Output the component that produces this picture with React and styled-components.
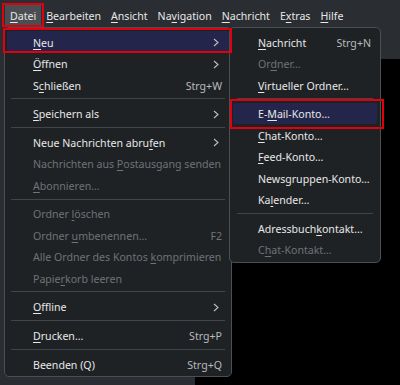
import React from 'react';
import styled, { createGlobalStyle, css } from 'styled-components';

const Global = createGlobalStyle`
  html, body { margin: 0; padding: 0; background: #000; }
  body {
    font-family: "Noto Sans", "DejaVu Sans", sans-serif;
    font-size: 10.6px;
    color: #e8e8e8;
  }
  #root { width: 400px; height: 385px; overflow: hidden; }
`;

const markCss = css`
  &::after {
    content: '';
    position: absolute;
    top: ${(p) => p.$mark.t}px;
    right: ${(p) => p.$mark.r}px;
    bottom: ${(p) => p.$mark.b}px;
    left: ${(p) => p.$mark.l}px;
    border: 2px solid #e1000c;
    pointer-events: none;
    z-index: 5;
  }
`;

const Window = styled.div`
  position: relative;
  width: 400px;
  height: 385px;
  display: flex;
  flex-direction: column;
  background: #000;
  overflow: hidden;
`;

const Header = styled.header`
  flex: none;
  height: 59px;
  background: #2a2d31;
`;

const MenuBar = styled.nav`
  display: flex;
  padding: 5px 0 0 5px;
`;

const BarItem = styled.div`
  position: relative;
  box-sizing: border-box;
  height: 20px;
  line-height: 19px;
  padding: 2px 5px 0;
  white-space: nowrap;
  color: #e8e8e8;
  background: ${(p) => (p.$active ? '#4a4d51' : 'transparent')};
  ${(p) => p.$mark && markCss}
`;

const Body = styled.div`
  flex: 1;
  display: flex;
`;

const LeftPane = styled.aside`
  width: 195px;
  background: #2a2d31;
`;

const MainPane = styled.main`
  flex: 1;
  background: #000;
`;

const Menu = styled.div`
  --pad: ${(p) => p.$pad}px;
  position: absolute;
  left: ${(p) => p.$x}px;
  top: ${(p) => p.$y}px;
  width: ${(p) => p.$w}px;
  box-sizing: border-box;
  display: flex;
  flex-direction: column;
  padding: 3px var(--pad) 2px;
  background: #1f2225;
  border: 1px solid #4b4e52;
  border-radius: 5px;
`;

const Row = styled.div`
  position: relative;
  box-sizing: border-box;
  height: 21.45px;
  display: flex;
  align-items: center;
  padding: 2px calc(9px - var(--pad)) 0 calc(28px - var(--pad));
  border-radius: 3px;
  white-space: nowrap;
  background: ${(p) => (p.$hl ? '#23264a' : 'transparent')};
  color: ${(p) => (p.$disabled ? '#6f7276' : '#e8e8e8')};
  ${(p) => p.$mark && markCss}
`;

const Label = styled.span`
  flex: 1;
`;

const Shortcut = styled.span`
  color: ${(p) => (p.$disabled ? '#6f7276' : '#b7b9bc')};
`;

const Arrow = styled.svg`
  display: block;
  margin-right: 3px;
`;

const Sep = styled.div`
  height: 7.2px;
  display: flex;
  align-items: center;
  &::before {
    content: '';
    flex: 1;
    height: 1px;
    margin: 0 4px;
    background: #414448;
  }
`;

const Mn = styled.span`
  text-decoration: underline;
  text-decoration-thickness: 1px;
  text-underline-offset: 2px;
`;

function Mnemonic({ text }) {
  const i = text.indexOf('&');
  if (i < 0) return text;
  return (
    <>
      {text.slice(0, i)}
      <Mn>{text[i + 1]}</Mn>
      {text.slice(i + 2)}
    </>
  );
}

const barItems = ['&Datei', '&Bearbeiten', '&Ansicht', 'Na&vigation', '&Nachricht', 'E&xtras', '&Hilfe'];

const mainItems = [
  { label: '&Neu', arrow: true, hl: true, mark: { t: -3, r: -3, b: -1, l: -4 } },
  { label: '&Öffnen', arrow: true },
  { label: 'S&chließen', shortcut: 'Strg+W' },
  { sep: true },
  { label: '&Speichern als', arrow: true },
  { sep: true },
  { label: 'Neue Nachrichten abru&fen', arrow: true },
  { label: 'Nachrichten aus &Postausgang senden', disabled: true },
  { label: '&Abonnieren…', disabled: true },
  { sep: true },
  { label: 'Ordner &löschen', disabled: true },
  { label: 'Ordner &umbenennen…', shortcut: 'F2', disabled: true },
  { label: 'Alle Ordner des Kontos &komprimieren', disabled: true },
  { label: 'Papie&rkorb leeren', disabled: true },
  { sep: true },
  { label: '&Offline', arrow: true },
  { sep: true },
  { label: '&Drucken…', shortcut: 'Strg+P' },
  { sep: true },
  { label: 'Beenden (Q)', shortcut: 'Strg+Q' },
];

const subItems = [
  { label: '&Nachricht', shortcut: 'Strg+N' },
  { label: 'Or&dner…', disabled: true },
  { label: '&Virtueller Ordner…' },
  { sep: true },
  { label: 'E-&Mail-Konto…', hl: true, mark: { t: -3.3, r: -7, b: -5.3, l: -3 } },
  { label: '&Chat-Konto…' },
  { label: '&Feed-Konto…' },
  { label: 'Newsgruppen-Konto…' },
  { label: 'Ka&lender…' },
  { sep: true },
  { label: 'Adressbuch&kontakt…' },
  { label: 'C&hat-Kontakt…', disabled: true },
];

function Chevron() {
  return (
    <Arrow width="6" height="9" viewBox="0 0 6 9">
      <polyline points="1,1 5,4.5 1,8" fill="none" stroke="#bdbfc2" strokeWidth="1.1" />
    </Arrow>
  );
}

function MenuList({ items }) {
  return items.map((it, i) =>
    it.sep ? (
      <Sep key={i} />
    ) : (
      <Row key={i} $hl={it.hl} $disabled={it.disabled} $mark={it.mark}>
        <Label>
          <Mnemonic text={it.label} />
        </Label>
        {it.shortcut && <Shortcut $disabled={it.disabled}>{it.shortcut}</Shortcut>}
        {it.arrow && <Chevron />}
      </Row>
    )
  );
}

export default function App() {
  return (
    <>
      <Global />
      <Window>
        <Header>
          <MenuBar>
            {barItems.map((b, i) => (
              <BarItem
                key={b}
                $active={i === 0}
                $mark={i === 0 ? { t: -2, r: -3, b: -2, l: -3 } : null}
              >
                <Mnemonic text={b} />
              </BarItem>
            ))}
          </MenuBar>
        </Header>
        <Body>
          <LeftPane />
          <MainPane />
        </Body>
        <Menu $x={4} $y={27} $w={228} $pad={2}>
          <MenuList items={mainItems} />
        </Menu>
        <Menu $x={229} $y={27} $w={152} $pad={3}>
          <MenuList items={subItems} />
        </Menu>
      </Window>
    </>
  );
}
